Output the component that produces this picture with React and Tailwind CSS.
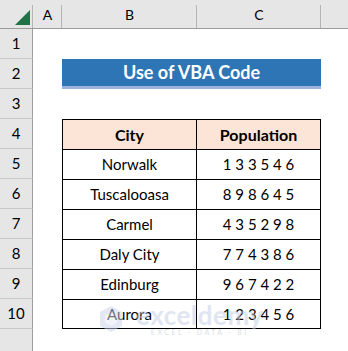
import React from 'react';

const data = [
  { city: 'Norwalk', pop: '1 3 3 5 4 6' },
  { city: 'Tuscalooasa', pop: '8 9 8 6 4 5' },
  { city: 'Carmel', pop: '4 3 5 2 9 8' },
  { city: 'Daly City', pop: '7 7 4 3 8 6' },
  { city: 'Edinburg', pop: '9 6 7 4 2 2' },
  { city: 'Aurora', pop: '1 2 3 4 5 6' },
];

const divider =
  "relative after:content-[''] after:absolute after:right-0 after:top-[5px] after:bottom-0 after:w-px after:bg-[#b4b4b4]";

const RowHead = ({ n }) => (
  <div className="w-[33px] shrink-0 h-full bg-[#e6e6e6] border-r border-b border-r-[#9e9e9e] border-b-[#c8c8c8] flex items-center justify-center text-[15px] text-black">
    {n}
  </div>
);

const TableRow = ({ n, left, right, header, last }) => (
  <div className="flex h-[30px]">
    <RowHead n={n} />
    <div className="w-[29px] shrink-0" />
    <div
      className={`w-[135px] shrink-0 flex items-center justify-center border-l border-r border-t border-black ${
        last ? 'border-b' : ''
      } ${header ? 'bg-[#fce4d6] font-bold text-[16px]' : ''}`}
    >
      {left}
    </div>
    <div
      className={`w-[124px] shrink-0 flex items-center justify-center border-r border-t border-black ${
        last ? 'border-b' : ''
      } ${header ? 'bg-[#fce4d6] font-bold text-[16px]' : 'whitespace-pre'}`}
    >
      {right}
    </div>
  </div>
);

const EmptyRow = ({ n }) => (
  <div className="flex h-[30px]">
    <RowHead n={n} />
  </div>
);

export default function App() {
  return (
    <div
      className="relative w-[348px] h-[351px] overflow-hidden bg-white flex flex-col text-[15px] text-black"
      style={{ fontFamily: 'Lato, "Open Sans", sans-serif' }}
    >
      {/* column headers */}
      <div className="flex h-[29px] shrink-0 bg-[#e6e6e6] border-b border-[#9b9b9b] text-[14px]">
        <div className={`w-[33px] shrink-0 flex items-end justify-end pr-[3px] pb-[3px] ${divider}`}>
          <svg width="15" height="15" viewBox="0 0 15 15">
            <polygon points="15,0 15,15 0,15" fill="#217346" />
          </svg>
        </div>
        <div className={`w-[29px] shrink-0 flex items-center justify-center ${divider}`}>A</div>
        <div className={`w-[135px] shrink-0 flex items-center justify-center ${divider}`}>B</div>
        <div className={`w-[124px] shrink-0 flex items-center justify-center ${divider}`}>C</div>
        <div className="flex-1" />
      </div>

      <EmptyRow n={1} />

      {/* title row */}
      <div className="flex h-[30px]">
        <RowHead n={2} />
        <div className="w-[29px] shrink-0" />
        <div className="w-[259px] shrink-0 bg-[#2e75b6] border-b-[3px] border-[#9db3dc] flex items-center justify-center text-white font-bold text-[18px]">
          Use of VBA Code
        </div>
      </div>

      <EmptyRow n={3} />

      <TableRow n={4} left="City" right="Population" header />
      {data.map((d, i) => (
        <TableRow
          key={d.city}
          n={i + 5}
          left={d.city}
          right={d.pop}
          last={i === data.length - 1}
        />
      ))}

      <div className="flex flex-1">
        <div className="w-[33px] shrink-0 bg-[#e6e6e6] border-r border-[#9e9e9e]" />
      </div>

      {/* watermark */}
      <div className="absolute left-[100px] top-[302px] flex items-center gap-[14px] opacity-50 pointer-events-none">
        <svg width="22" height="26" viewBox="0 0 22 26">
          <polygon points="11,0 22,6 22,20 11,26 0,20 0,6" fill="#c9d3ea" />
          <polygon points="11,6 17,9.5 17,16.5 11,20 5,16.5 5,9.5" fill="#e4e9f5" />
        </svg>
        <div className="flex flex-col items-center leading-none">
          <span className="text-[26px] font-bold text-[#c3cde6] tracking-[0.5px]">exceldemy</span>
          <span className="text-[7px] text-[#b7bfd0] tracking-[2.5px] mt-[1px]">EXCEL · DATA · BI</span>
        </div>
      </div>
    </div>
  );
}
